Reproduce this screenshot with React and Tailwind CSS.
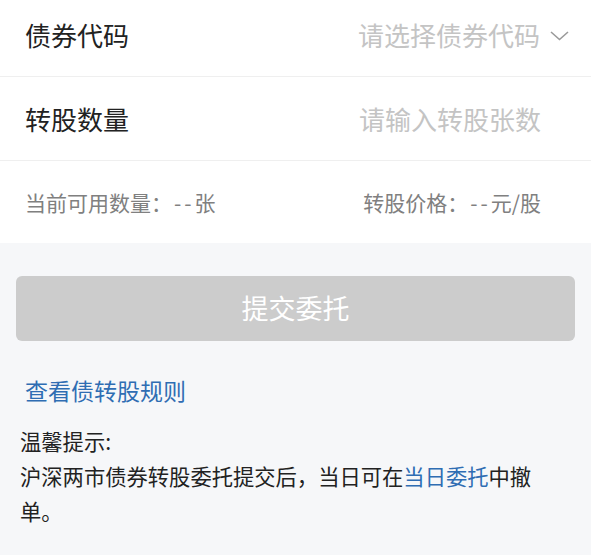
import React from "react";

export default function App() {
  return (
    <div className="w-[591px] h-[555px] bg-[#f6f7f9] font-['Noto_Sans_CJK_SC','Noto_Sans',sans-serif] overflow-hidden">
      <div className="bg-white">
        <div className="h-[77px] flex items-center justify-between pl-[25px] pr-[22px] pb-[6px] border-b border-[#efefef]">
          <span className="text-[26px] leading-none text-[#222222]">债券代码</span>
          <div className="flex items-center gap-[10px]">
            <span className="text-[26px] leading-none text-[#c4c4c4]">请选择债券代码</span>
            <svg width="19" height="10" viewBox="0 0 19 10" className="mt-[2px]">
              <path d="M1 1 L9.5 8.5 L18 1" fill="none" stroke="#9a9a9a" strokeWidth="1.6" />
            </svg>
          </div>
        </div>
        <div className="h-[84px] flex items-center justify-between pl-[25px] pr-[50px] border-b border-[#efefef]">
          <span className="text-[26px] leading-none text-[#222222]">转股数量</span>
          <span className="text-[26px] leading-none text-[#c4c4c4]">请输入转股张数</span>
        </div>
        <div className="h-[82px] flex items-center justify-between pl-[25px] pr-[50px] text-[21px] leading-none text-[#808080]">
          <span>当前可用数量：<span className="tracking-[3px] pl-[2px]">--</span>张</span>
          <span>转股价格：<span className="tracking-[3px] pl-[2px]">--</span>元/股</span>
        </div>
      </div>
      <div className="px-[16px] pt-[33px]">
        <div className="h-[65px] rounded-[6px] bg-[#cccccc] flex items-center justify-center text-white text-[27px]">
          提交委托
        </div>
      </div>
      <div className="pl-[25px] mt-[33px] h-[32px] flex items-center text-[23px] text-[#2f6db3]">
        查看债转股规则
      </div>
      <div className="pl-[20px] mt-[17px] w-[545px] text-[21.3px] leading-[35px] text-[#222222]">
        <div>温馨提示:</div>
        <div className="w-[525px]">
          沪深两市债券转股委托提交后，当日可在<span className="text-[#2f6db3]">当日委托</span>中撤单。
        </div>
      </div>
    </div>
  );
}
